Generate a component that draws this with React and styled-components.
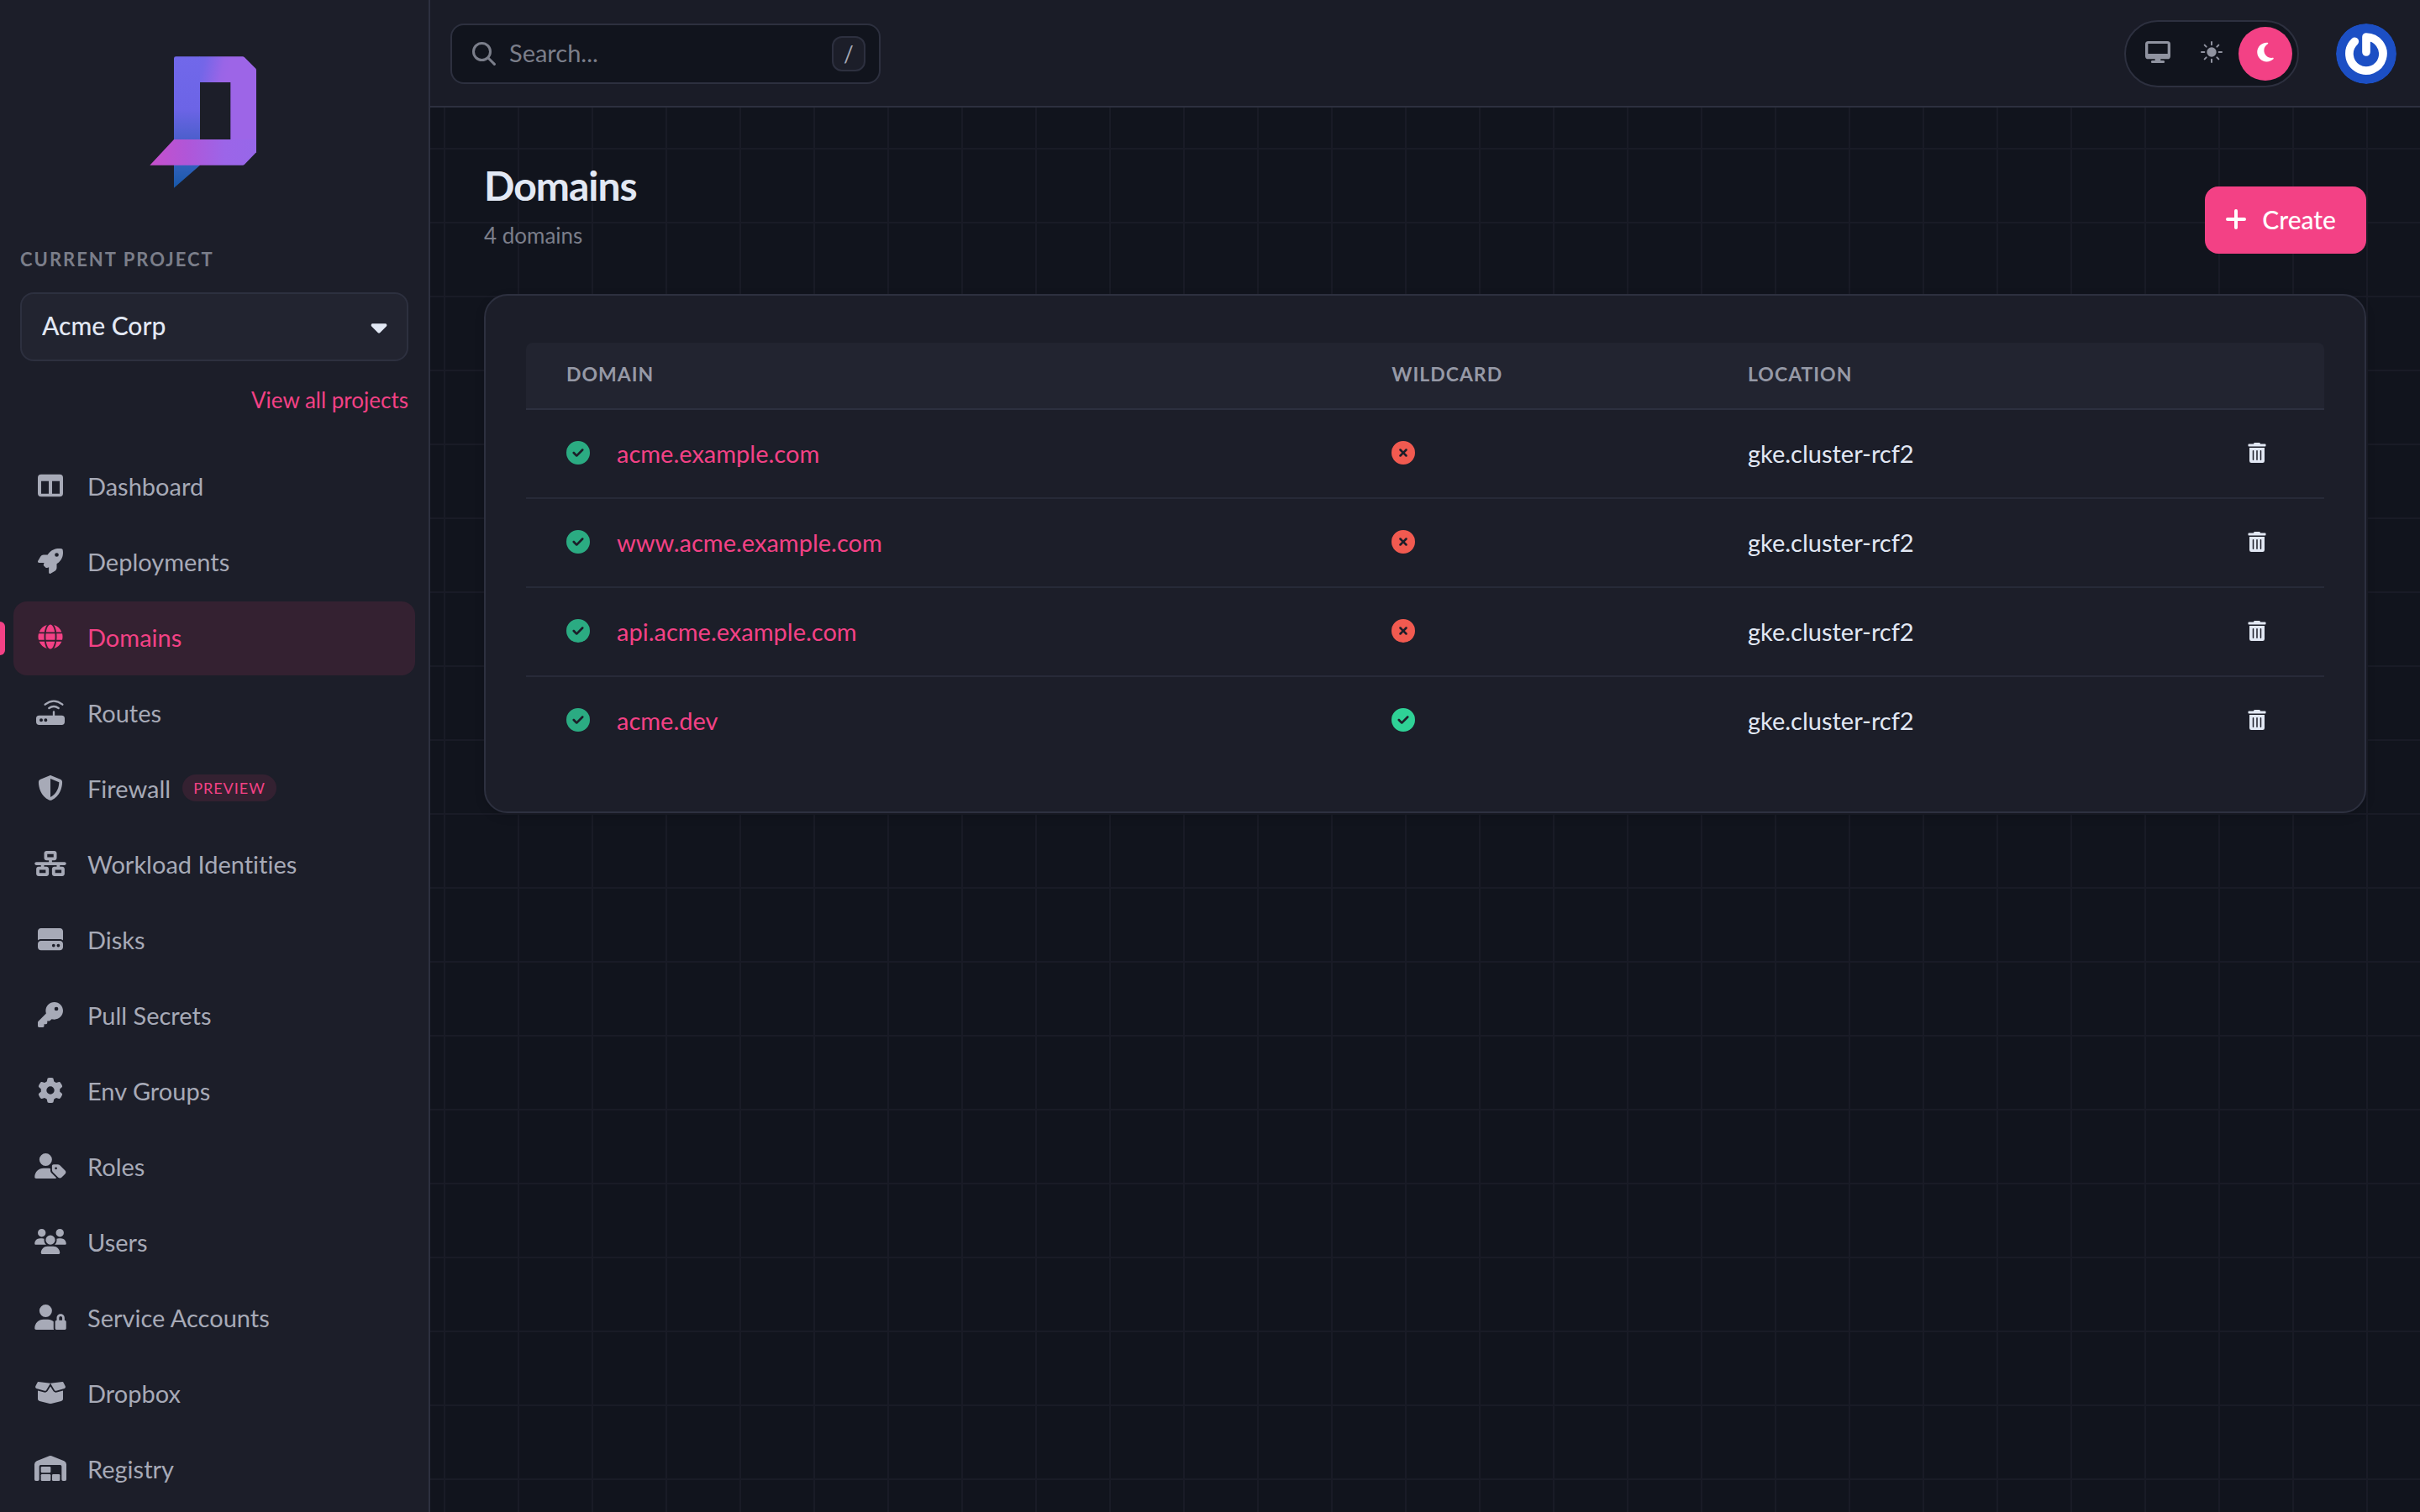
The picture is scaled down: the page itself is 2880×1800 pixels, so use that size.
import React, { useState } from "react";
import styled, { createGlobalStyle, css } from "styled-components";
import {
    FaRocket,
    FaShieldHalved,
    FaNetworkWired,
    FaHardDrive,
    FaKey,
    FaGear,
    FaUserTag,
    FaUsers,
    FaUserLock,
    FaBoxOpen,
    FaCircleCheck,
    FaCircleXmark,
    FaCaretDown,
    FaMoon
} from "react-icons/fa6";
import { FaGlobe, FaTrashAlt } from "react-icons/fa";

const colors = {
    background: "#11141d",
    grid: "#191b26",
    panel: "#1c1e29",
    topbar: "#1a1c27",
    raised: "#222430",
    border: "#2d303f",
    rowBorder: "#272a38",
    text: "#e2e8f4",
    nav: "#a7aab7",
    muted: "#7b7e8a",
    pink: "#f34185",
    pinkSoft: "#342131",
    green: "#2bab82",
    greenBright: "#2fd196",
    red: "#f15a50"
};

const GlobalStyle = createGlobalStyle`
    *, *::before, *::after { box-sizing: border-box; }
    body {
        margin: 0;
        background-color: ${colors.background};
        color: ${colors.text};
        font-family: Lato, "Liberation Sans", sans-serif;
        font-size: 29px;
        font-variant-ligatures: none;
    }
    button, input, select { font-family: inherit; }
    a { color: inherit; text-decoration: none; }
`;

/* ---------- layout ---------- */

const Layout = styled.div`
    display: flex;
    min-height: 100vh;
    background-image:
        linear-gradient(${colors.grid} 2px, transparent 2px),
        linear-gradient(90deg, ${colors.grid} 2px, transparent 2px);
    background-size: 88px 88px;
`;

const Sidebar = styled.aside`
    flex: 0 0 512px;
    background-color: ${colors.panel};
    border-right: 2px solid ${colors.border};
    padding-top: 54px;
`;

const Content = styled.div`
    flex: 1;
    min-width: 0;
`;

/* ---------- sidebar ---------- */

const LogoLink = styled.a`
    display: flex;
    justify-content: center;
    margin-bottom: 62px;
`;

const ProjectPicker = styled.div`
    display: flex;
    flex-direction: column;
    padding: 0 24px;
    margin-bottom: 44px;
`;

const ProjectLabel = styled.label`
    margin-bottom: 26px;
    font-size: 22px;
    line-height: 26px;
    font-weight: 700;
    letter-spacing: 2px;
    text-transform: uppercase;
    color: ${colors.muted};
`;

const SelectWrapper = styled.div`
    display: grid;
    align-items: center;
    margin-bottom: 30px;

    select, svg { grid-area: 1 / 1; }
    svg {
        justify-self: end;
        margin-right: 20px;
        pointer-events: none;
    }
`;

const Select = styled.select`
    width: 100%;
    height: 82px;
    padding: 0 24px 4px;
    appearance: none;
    border: 2px solid ${colors.border};
    border-radius: 16px;
    background-color: ${colors.raised};
    color: ${colors.text};
    font-size: 30px;
    font-weight: 500;
`;

const ProjectsLink = styled.a`
    align-self: flex-end;
    font-size: 26px;
    line-height: 32px;
    color: ${colors.pink};
`;

const NavList = styled.ul`
    display: flex;
    flex-direction: column;
    gap: 2px;
    margin: 0;
    padding: 0;
    list-style: none;
`;

const NavItem = styled.li`
    position: relative;
    padding: 0 16px;

    ${props => props.$active && css`
        &::before {
            content: "";
            position: absolute;
            left: 0;
            top: 24px;
            width: 6px;
            height: 40px;
            border-radius: 0 6px 6px 0;
            background-color: ${colors.pink};
        }
    `}
`;

const NavLink = styled.a`
    display: flex;
    align-items: center;
    height: 88px;
    padding: 0 22px 4px;
    border-radius: 16px;
    color: ${props => props.$active ? colors.pink : colors.nav};
    background-color: ${props => props.$active ? colors.pinkSoft : "transparent"};
`;

const NavIcon = styled.span`
    display: flex;
    justify-content: center;
    width: 44px;
    margin-right: 22px;

    svg {
        width: 38px;
        height: 30px;
    }
`;

const Badge = styled.span`
    margin-left: 14px;
    padding: 0 13px;
    border-radius: 16px;
    background-color: ${colors.pinkSoft};
    color: ${colors.pink};
    font-size: 18px;
    line-height: 32px;
    letter-spacing: 1px;
    text-transform: uppercase;
`;

/* ---------- top bar ---------- */

const Topbar = styled.header`
    display: flex;
    align-items: center;
    padding: 24px 28px 22px 24px;
    border-bottom: 2px solid ${colors.border};
    background-color: ${colors.topbar};
`;

const SearchBox = styled.label`
    display: flex;
    align-items: center;
    width: 512px;
    height: 72px;
    margin-right: auto;
    padding: 0 16px 0 24px;
    border: 2px solid ${colors.border};
    border-radius: 16px;
    background-color: ${colors.background};
    color: ${colors.muted};
`;

const SearchInput = styled.input`
    flex: 1;
    min-width: 0;
    padding: 0 16px 4px;
    border: none;
    outline: none;
    background: none;
    color: ${colors.text};
    font-size: 29px;
    &::placeholder { color: ${colors.muted}; opacity: 1; }
`;

const Shortcut = styled.kbd`
    display: flex;
    align-items: center;
    justify-content: center;
    width: 40px;
    height: 42px;
    border: 2px solid ${colors.border};
    border-radius: 12px;
    background-color: ${colors.panel};
    color: ${colors.nav};
    font-family: inherit;
    font-size: 26px;
`;

const ThemeSwitch = styled.div`
    display: flex;
    margin-right: 44px;
    padding: 6px;
    border: 2px solid ${colors.border};
    border-radius: 40px;
    background-color: ${colors.background};
`;

const ThemeButton = styled.button`
    display: flex;
    align-items: center;
    justify-content: center;
    width: 64px;
    height: 64px;
    padding: 0 0 4px;
    border: none;
    border-radius: 50%;
    cursor: pointer;
    color: ${props => props.$active ? "#fff" : "#9093a0"};
    background-color: ${props => props.$active ? colors.pink : "transparent"};
`;

const AvatarButton = styled.button`
    display: flex;
    width: 72px;
    height: 72px;
    padding: 0;
    border: none;
    border-radius: 50%;
    overflow: hidden;
    background: none;
    cursor: pointer;
`;

/* ---------- page ---------- */

const Page = styled.main`
    padding: 64px;
`;

const PageHeader = styled.div`
    display: flex;
    align-items: flex-end;
    justify-content: space-between;
    margin-bottom: 48px;
`;

const Title = styled.h1`
    margin: 0 0 14px;
    font-size: 48px;
    line-height: 58px;
    font-weight: 700;
    letter-spacing: -1px;
`;

const Subtitle = styled.p`
    margin: 0;
    padding-bottom: 6px;
    font-size: 26px;
    line-height: 32px;
    color: ${colors.muted};
`;

const CreateButton = styled.button`
    display: flex;
    align-items: center;
    gap: 18px;
    height: 80px;
    padding: 0 36px 2px 24px;
    border: none;
    border-radius: 16px;
    background-color: ${colors.pink};
    color: #fff;
    font-size: 30px;
    font-weight: 500;
    cursor: pointer;
`;

const Card = styled.section`
    padding: 56px 48px;
    border: 2px solid ${colors.border};
    border-radius: 28px;
    background-color: ${colors.panel};
    box-shadow: 0 4px 12px rgba(0, 0, 0, 0.15);
`;

const Table = styled.table`
    width: 100%;
    table-layout: fixed;
    border-collapse: separate;
    border-spacing: 0;
    font-size: 29px;
`;

const HeadCell = styled.th`
    width: ${props => props.$width};
    height: 80px;
    padding: 0 48px 4px;
    border-bottom: 2px solid ${colors.border};
    background-color: ${colors.raised};
    color: #9699a6;
    font-size: 23px;
    font-weight: 700;
    letter-spacing: 1px;
    text-align: left;
    text-transform: uppercase;
    &:first-child { border-top-left-radius: 8px; }
    &:last-child { border-top-right-radius: 8px; }
`;

const Row = styled.tr`
    height: 104px;
    &:not(:last-child) { height: 106px; }
    &:not(:last-child) td { border-bottom: 2px solid ${colors.rowBorder}; }
`;

const Cell = styled.td`
    padding: 0 48px 2px;
`;

const CellContent = styled.div`
    display: flex;
    align-items: center;
    gap: 32px;
    justify-content: ${props => props.$end ? "flex-end" : "flex-start"};
`;

const DomainLink = styled.a`
    color: ${colors.pink};
`;

const DeleteButton = styled.button`
    display: flex;
    align-items: center;
    justify-content: center;
    width: 64px;
    height: 64px;
    padding: 0;
    border: none;
    background: none;
    color: ${colors.text};
    cursor: pointer;
`;

/* ---------- drawings ---------- */

function Logo() {
    return (
        <svg width="200" height="180" viewBox="465 162 600 540" aria-hidden="true">
            <defs>
                <linearGradient id="stem" x1="0" y1="202" x2="0" y2="671" gradientUnits="userSpaceOnUse">
                    <stop offset="0" stopColor="#7168ea" />
                    <stop offset="0.4" stopColor="#6c64e6" />
                    <stop offset="0.63" stopColor="#4c5fcc" />
                    <stop offset="0.83" stopColor="#3060bb" />
                    <stop offset="1" stopColor="#1758a8" />
                </linearGradient>
                <linearGradient id="bowl" x1="700" y1="215" x2="820" y2="240" gradientUnits="userSpaceOnUse">
                    <stop offset="0" stopColor="#7066e9" />
                    <stop offset="0.25" stopColor="#7566e8" />
                    <stop offset="0.8" stopColor="#9965e7" />
                    <stop offset="1" stopColor="#9d65e7" />
                </linearGradient>
                <linearGradient id="base" x1="535" y1="0" x2="915" y2="0" gradientUnits="userSpaceOnUse">
                    <stop offset="0" stopColor="#c64fcb" />
                    <stop offset="0.35" stopColor="#b056d8" />
                    <stop offset="0.7" stopColor="#9c65e8" />
                    <stop offset="1" stopColor="#9767e9" />
                </linearGradient>
            </defs>
            <path d="M713 202H866q4 0 7 3L912 244q3 3 3 7V545H823V294H713z" fill="url(#bowl)" />
            <path d="M628 202H714V590L621 671V209q0-7 7-7z" fill="url(#stem)" />
            <path d="M621 498H915V540q0 4-3 7L873 587q-3 3-7 3H535z" fill="url(#base)" />
        </svg>
    );
}

function ColumnsIcon() {
    return (
        <svg viewBox="0 0 90 90" fill="currentColor">
            <path fillRule="evenodd" d="M12 5H78a12 12 0 0 1 12 12V73a12 12 0 0 1-12 12H12A12 12 0 0 1 0 73V17A12 12 0 0 1 12 5zM12 29V74H39V29zM51 29V74H78V29z" />
        </svg>
    );
}

function RouterIcon() {
    return (
        <svg viewBox="39 41 102 90" fill="none" stroke="currentColor" strokeWidth="7" strokeLinecap="round">
            <path d="M71 58Q102 34 133 58M85 71Q102 59 119 71M102 84V98" />
            <path
                fill="currentColor"
                stroke="none"
                fillRule="evenodd"
                d="M50 97H130a11 11 0 0 1 11 11v12a11 11 0 0 1-11 11H50a11 11 0 0 1-11-11V108a11 11 0 0 1 11-11zM57 108a6 6 0 1 0 0 12a6 6 0 1 0 0-12zM73 108a6 6 0 1 0 0 12a6 6 0 1 0 0-12z"
            />
        </svg>
    );
}

function WarehouseIcon() {
    return (
        <svg viewBox="0 0 114 90" fill="currentColor">
            <path d="M0 85V31q0-8 8-12L53 1q4-2 8 0l45 18q8 4 8 12V85q0 5-5 5H102q-5 0-5-5V38q0-5-5-5H22q-5 0-5 5V85q0 5-5 5H5q-5 0-5-5z" />
            <rect x="23" y="39" width="35" height="22" rx="4" />
            <rect x="23" y="66" width="35" height="24" rx="4" />
            <rect x="63" y="66" width="28" height="24" rx="4" />
        </svg>
    );
}

function SearchIcon() {
    return (
        <svg width="28" height="28" viewBox="0 0 28 28" fill="none" stroke="currentColor" strokeWidth="3" strokeLinecap="round" aria-hidden="true">
            <circle cx="11.5" cy="11.5" r="10" />
            <path d="M19 19l7.4 7.4" />
        </svg>
    );
}

function MonitorIcon() {
    return (
        <svg width="30" height="26" viewBox="0 0 90 78" fill="currentColor">
            <path fillRule="evenodd" d="M11 0H79a11 11 0 0 1 11 11V53a11 11 0 0 1-11 11H55v5H65a4 4 0 0 1 0 9H25a4 4 0 0 1 0-9H35V64H11A11 11 0 0 1 0 53V11A11 11 0 0 1 11 0zM10 9V45H80V9z" />
        </svg>
    );
}

function SunIcon() {
    return (
        <svg width="26" height="26" viewBox="-39 -39 78 78" fill="none" stroke="currentColor" strokeWidth="6" strokeLinecap="round">
            <circle r="17" fill="currentColor" stroke="none" />
            <path d="M0-36V-26M0 36V26M-36 0H-26M36 0H26M-25-25L-19-19M25-25L19-19M-25 25L-19 19M25 25L19 19" />
        </svg>
    );
}

function PlusIcon() {
    return (
        <svg width="26" height="26" viewBox="0 0 26 26" fill="none" stroke="currentColor" strokeWidth="4" strokeLinecap="round" aria-hidden="true">
            <path d="M13 3V23M3 13H23" />
        </svg>
    );
}

function Avatar() {
    return (
        <svg width="72" height="72" viewBox="-108 -108 216 216" aria-hidden="true">
            <circle r="108" fill="#1c4fc4" />
            <path
                d="M0-6V-60A60 60 0 1 1-41-44"
                fill="none"
                stroke="#fff"
                strokeWidth="29"
                strokeLinecap="round"
                strokeLinejoin="round"
            />
        </svg>
    );
}

/* ---------- data ---------- */

const navItems = [
    { label: "Dashboard", icon: ColumnsIcon },
    { label: "Deployments", icon: FaRocket },
    { label: "Domains", icon: FaGlobe },
    { label: "Routes", icon: RouterIcon },
    { label: "Firewall", icon: FaShieldHalved, badge: "Preview" },
    { label: "Workload Identities", icon: FaNetworkWired },
    { label: "Disks", icon: FaHardDrive },
    { label: "Pull Secrets", icon: FaKey },
    { label: "Env Groups", icon: FaGear },
    { label: "Roles", icon: FaUserTag },
    { label: "Users", icon: FaUsers },
    { label: "Service Accounts", icon: FaUserLock },
    { label: "Dropbox", icon: FaBoxOpen },
    { label: "Registry", icon: WarehouseIcon }
];

const themes = [
    { name: "system", icon: <MonitorIcon /> },
    { name: "light", icon: <SunIcon /> },
    { name: "dark", icon: <FaMoon size={26} /> }
];

const domains = [
    { name: "acme.example.com", wildcard: false, location: "gke.cluster-rcf2" },
    { name: "www.acme.example.com", wildcard: false, location: "gke.cluster-rcf2" },
    { name: "api.acme.example.com", wildcard: false, location: "gke.cluster-rcf2" },
    { name: "acme.dev", wildcard: true, location: "gke.cluster-rcf2" }
];

export default function App() {
    const [active, setActive] = useState("Domains");
    const [theme, setTheme] = useState("dark");
    const [search, setSearch] = useState("");

    return (
        <React.Fragment>
            <GlobalStyle />
            <Layout>
                <Sidebar>
                    <LogoLink href="#" aria-label="Home"><Logo /></LogoLink>
                    <ProjectPicker>
                        <ProjectLabel htmlFor="project">Current project</ProjectLabel>
                        <SelectWrapper>
                            <Select id="project">
                                <option>Acme Corp</option>
                            </Select>
                            <FaCaretDown size={30} />
                        </SelectWrapper>
                        <ProjectsLink href="#">View all projects</ProjectsLink>
                    </ProjectPicker>
                    <nav>
                        <NavList>
                            {navItems.map(({ label, icon: Icon, badge }) => (
                                <NavItem key={label} $active={label === active}>
                                    <NavLink href="#" $active={label === active} onClick={() => setActive(label)}>
                                        <NavIcon><Icon /></NavIcon>
                                        {label}
                                        {badge && <Badge>{badge}</Badge>}
                                    </NavLink>
                                </NavItem>
                            ))}
                        </NavList>
                    </nav>
                </Sidebar>
                <Content>
                    <Topbar>
                        <SearchBox>
                            <SearchIcon />
                            <SearchInput
                                type="text"
                                aria-label="Search"
                                placeholder="Search..."
                                value={search}
                                onChange={e => setSearch(e.target.value)}
                            />
                            <Shortcut>/</Shortcut>
                        </SearchBox>
                        <ThemeSwitch>
                            {themes.map(({ name, icon }) => (
                                <ThemeButton
                                    key={name}
                                    type="button"
                                    aria-label={name}
                                    $active={name === theme}
                                    onClick={() => setTheme(name)}
                                >
                                    {icon}
                                </ThemeButton>
                            ))}
                        </ThemeSwitch>
                        <AvatarButton type="button" aria-label="Account"><Avatar /></AvatarButton>
                    </Topbar>
                    <Page>
                        <PageHeader>
                            <div>
                                <Title>Domains</Title>
                                <Subtitle>{domains.length} domains</Subtitle>
                            </div>
                            <CreateButton type="button"><PlusIcon />Create</CreateButton>
                        </PageHeader>
                        <Card>
                            <Table>
                                <thead>
                                    <tr>
                                        <HeadCell $width="45.9%">Domain</HeadCell>
                                        <HeadCell $width="19.8%">Wildcard</HeadCell>
                                        <HeadCell>Location</HeadCell>
                                        <HeadCell $width="10%" aria-label="Actions" />
                                    </tr>
                                </thead>
                                <tbody>
                                    {domains.map(domain => (
                                        <Row key={domain.name}>
                                            <Cell>
                                                <CellContent>
                                                    <FaCircleCheck size={28} color={colors.green} />
                                                    <DomainLink href="#">{domain.name}</DomainLink>
                                                </CellContent>
                                            </Cell>
                                            <Cell>
                                                <CellContent>
                                                    {domain.wildcard
                                                        ? <FaCircleCheck size={28} color={colors.greenBright} />
                                                        : <FaCircleXmark size={28} color={colors.red} />}
                                                </CellContent>
                                            </Cell>
                                            <Cell>{domain.location}</Cell>
                                            <Cell>
                                                <CellContent $end>
                                                    <DeleteButton type="button" aria-label={`Delete ${domain.name}`}>
                                                        <FaTrashAlt size={24} />
                                                    </DeleteButton>
                                                </CellContent>
                                            </Cell>
                                        </Row>
                                    ))}
                                </tbody>
                            </Table>
                        </Card>
                    </Page>
                </Content>
            </Layout>
        </React.Fragment>
    );
}
